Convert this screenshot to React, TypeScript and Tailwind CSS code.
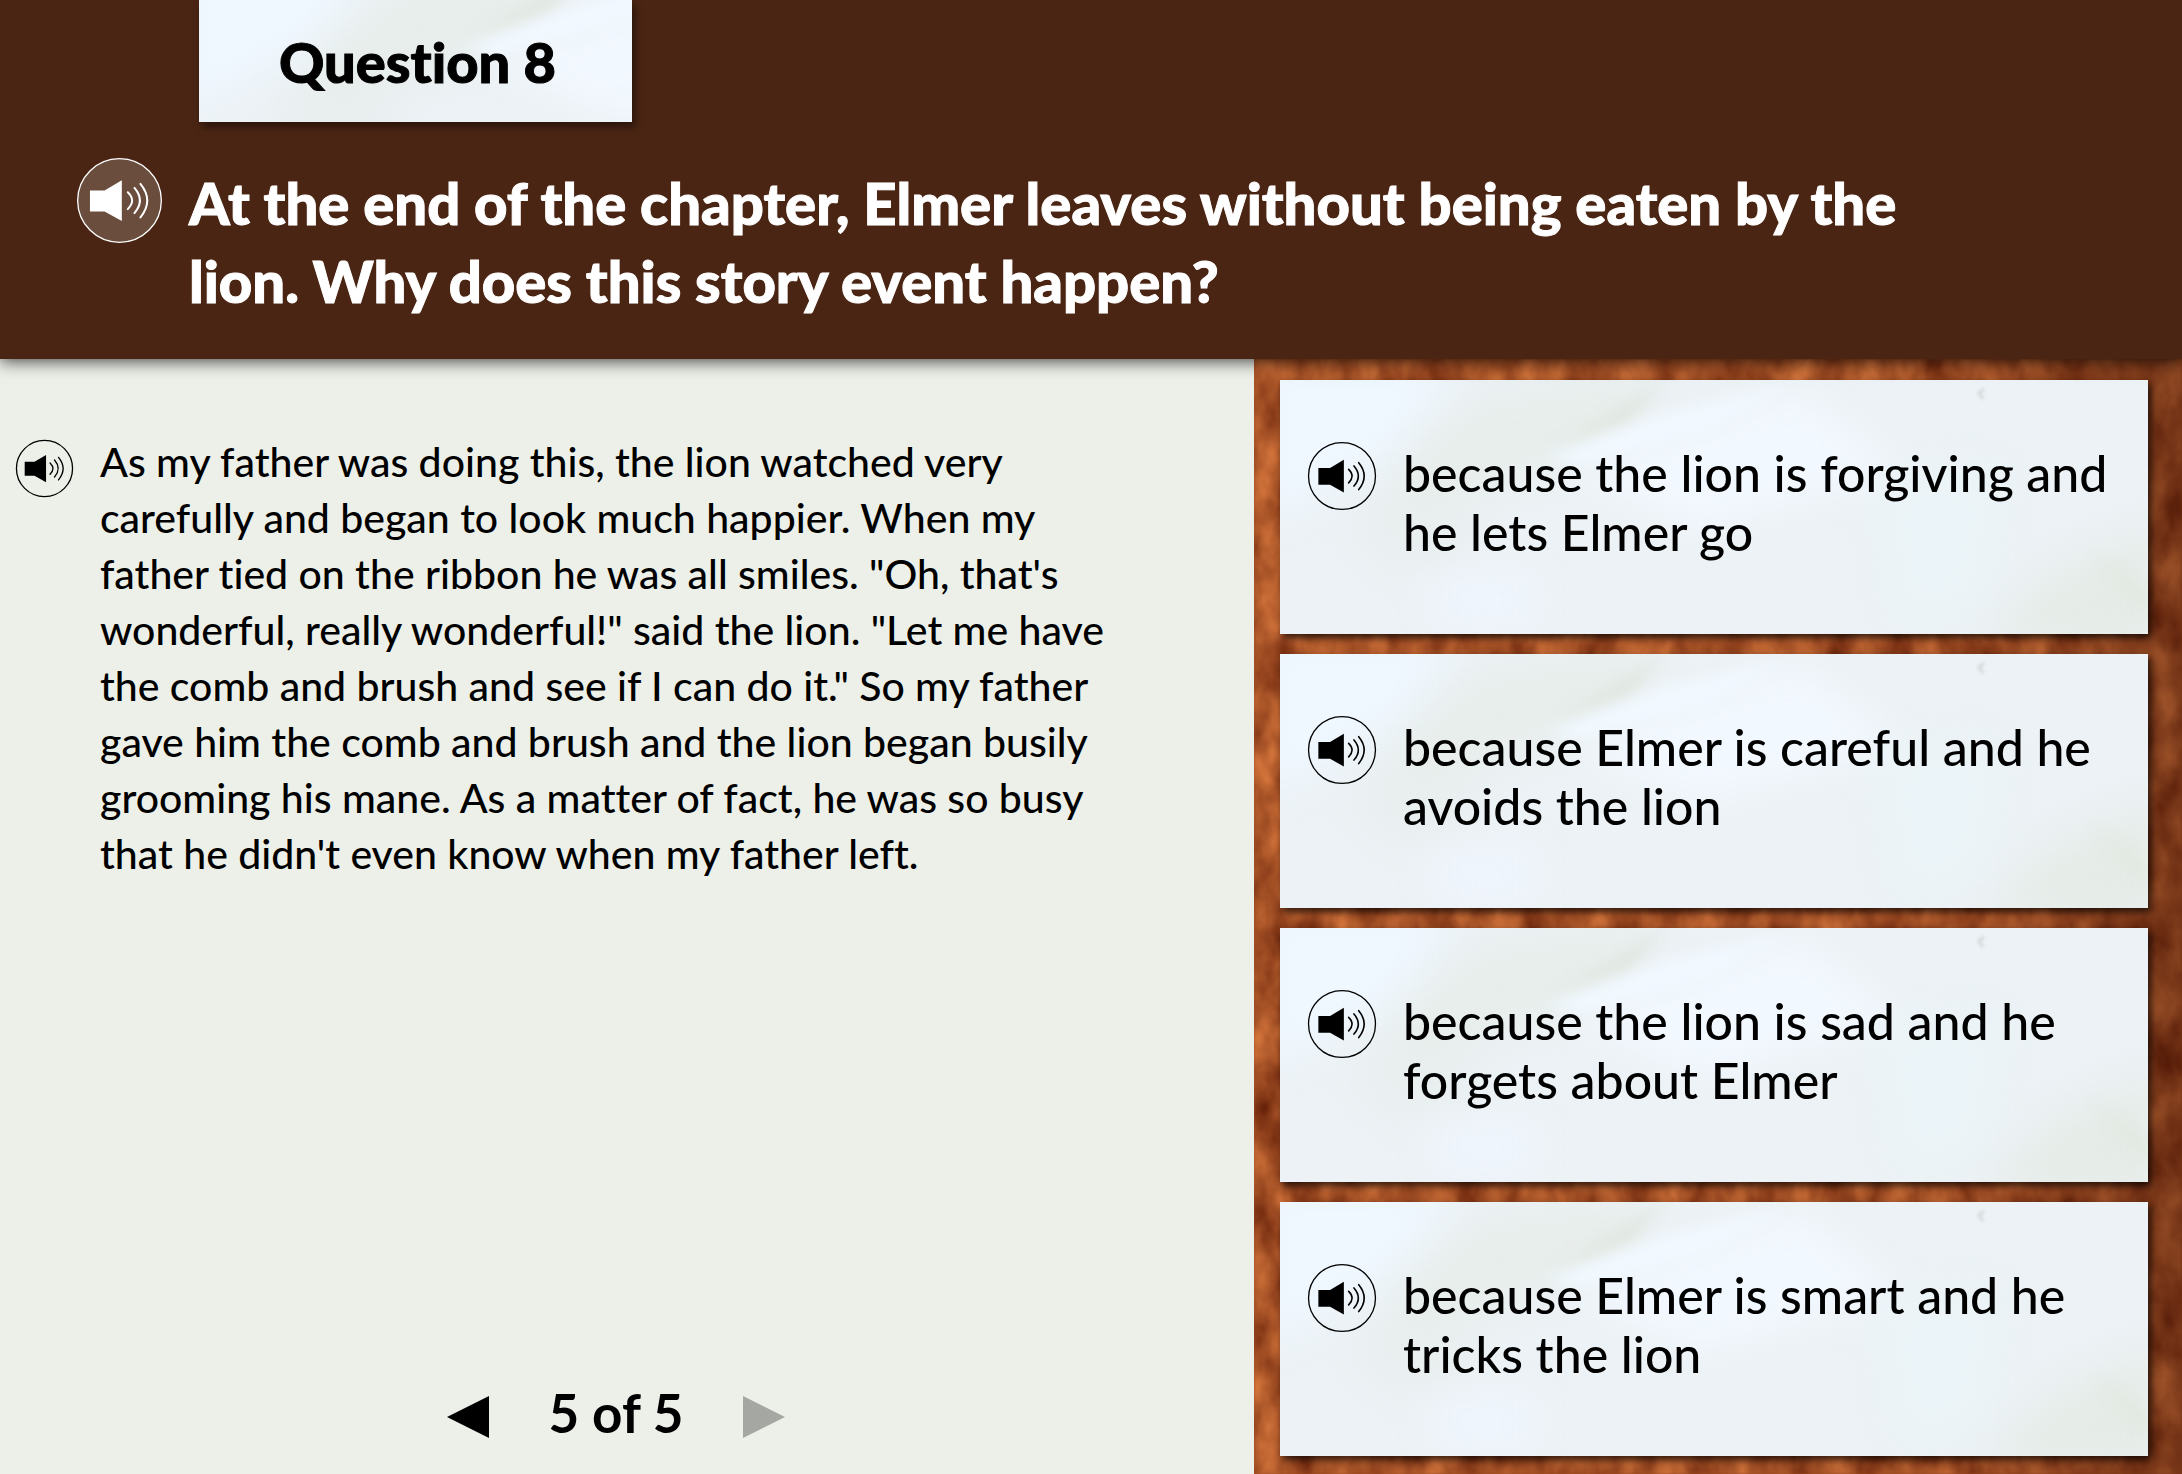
const passage =
  'As my father was doing this, the lion watched very carefully and began to look much happier. When my father tied on the ribbon he was all smiles. "Oh, that\'s wonderful, really wonderful!" said the lion. "Let me have the comb and brush and see if I can do it." So my father gave him the comb and brush and the lion began busily grooming his mane. As a matter of fact, he was so busy that he didn\'t even know when my father left.';

const answers = [
  'because the lion is forgiving and he lets Elmer go',
  'because Elmer is careful and he avoids the lion',
  'because the lion is sad and he forgets about Elmer',
  'because Elmer is smart and he tricks the lion',
];

function SpeakerButton({ label, className, fill = 'none' }: { label: string; className: string; fill?: string }) {
  return (
    <button type="button" aria-label={label} className={`shrink-0 cursor-pointer rounded-full ${className}`}>
      <svg viewBox="0 0 256 256" className="block h-full w-full overflow-visible" aria-hidden="true">
        <circle cx="128" cy="128" r="126" fill={fill} stroke="currentColor" strokeWidth="1.3" vectorEffect="non-scaling-stroke" />
        <path d="M39 98H83L135 67V190L83 161H39Z" fill="currentColor" />
        <g fill="none" stroke="currentColor" strokeWidth="6" strokeLinecap="round">
          <path d="M153 103Q179 128 153 154" />
          <path d="M173 90Q206 128 173 166" />
          <path d="M191 78Q232 128 191 179" />
        </g>
      </svg>
    </button>
  );
}

function PaperTexture({ id, viewBox = '0 0 868 254' }: { id: string; viewBox?: string }) {
  return (
    <svg viewBox={viewBox} preserveAspectRatio="none" className="absolute inset-0 h-full w-full" aria-hidden="true">
      <defs>
        <filter id={`${id}-wide`} x="-50%" y="-50%" width="200%" height="200%" colorInterpolationFilters="sRGB">
          <feGaussianBlur stdDeviation="20" />
        </filter>
        <filter id={`${id}-soft`} x="-50%" y="-50%" width="200%" height="200%" colorInterpolationFilters="sRGB">
          <feGaussianBlur stdDeviation="7" />
        </filter>
        <filter id={`${id}-fine`} x="-50%" y="-50%" width="200%" height="200%" colorInterpolationFilters="sRGB">
          <feGaussianBlur stdDeviation="1.5" />
        </filter>
      </defs>
      <rect width="868" height="254" fill="#ecf2f5" />
      <g filter={`url(#${id}-wide)`}>
        <path d="M-20-20H180L120 70L-20 150Z" fill="#eff7ff" />
        <path d="M200 20L380 -10L330 60L200 110L100 150L120 80Z" fill="#e7edea" />
        <path d="M290 90L520 10L620 90L420 150Z" fill="#f2f8ff" />
        <path d="M70 130L190 110L180 190L110 180Z" fill="#e8eeee" />
        <path d="M700 260L780 190L880 150V270Z" fill="#e5ebe6" />
        <path d="M150 190H260V250H150Z" fill="#eff5fd" />
        <path d="M600 100L720 90L700 220L620 240Z" fill="#ebf4f8" />
      </g>
      <g filter={`url(#${id}-soft)`}>
        <path d="M385 0L350 40L262 76L335 30Z" fill="#e0e6df" />
        <path d="M265 76L390 32L510 6L430 50L300 86Z" fill="#f1f8ff" />
        <path d="M810 170L868 216V232Z" fill="#e0e6dd" />
      </g>
      <path d="M704 9L699 13L703 19" fill="none" stroke="#d3d9db" strokeWidth="3" filter={`url(#${id}-fine)`} />
    </svg>
  );
}

function WoodTexture() {
  return (
    <svg className="absolute inset-0 h-full w-full" aria-hidden="true">
      <defs>
        <filter id="wood-grain" x="0" y="0" width="100%" height="100%" colorInterpolationFilters="sRGB">
          <feTurbulence type="fractalNoise" baseFrequency="0.03 0.018" numOctaves="4" seed="7" />
          <feColorMatrix
            values="0.6 0 0 0 0.35
                    0.46 0 0 0 0.09
                    0.28 0 0 0 0.01
                    0 0 0 0 1"
          />
          <feGaussianBlur stdDeviation="0.8" />
        </filter>
        <linearGradient id="wood-shade" x1="0" x2="1" y1="0" y2="0">
          <stop offset="0" stopColor="#2a0800" stopOpacity="0" />
          <stop offset="0.75" stopColor="#2a0800" stopOpacity="0.05" />
          <stop offset="1" stopColor="#2a0800" stopOpacity="0.38" />
        </linearGradient>
      </defs>
      <rect width="100%" height="100%" filter="url(#wood-grain)" />
      <rect width="100%" height="100%" fill="url(#wood-shade)" />
    </svg>
  );
}

export default function App() {
  return (
    <div className="flex min-h-screen flex-col bg-[#edf0e9] font-['Lato',sans-serif] text-black [font-variant-ligatures:none]">
      <header className="relative z-10 bg-[#4a2513] shadow-[0_2px_16px_rgba(0,0,0,0.75)]">
        <div className="relative ml-[199px] flex h-[122px] w-[433px] justify-center bg-[#ecf2f5] pt-8 pl-1 shadow-[3px_5px_8px_rgba(0,0,0,0.45)]">
          <PaperTexture id="tab" viewBox="0 30 433 122" />
          <h1 className="relative text-[56px] leading-[60px] font-black [-webkit-text-stroke:1px_currentColor]">Question 8</h1>
        </div>
        <div className="flex items-start gap-[27px] pt-9 pr-[182px] pb-[39px] pl-[77px] text-white">
          <SpeakerButton label="Read the question aloud" className="size-[85px]" fill="#6b4d3e" />
          <h2 className="pt-1.5 text-[58px] leading-[78px] font-black [-webkit-text-stroke:1px_currentColor]">
            At the end of the chapter, Elmer leaves without being eaten by the lion. Why does this story event happen?
          </h2>
        </div>
      </header>

      <main className="flex flex-1">
        <section className="flex flex-1 flex-col pt-[75px]">
          <div className="flex items-start gap-[27px] pr-[124px] pl-4">
            <SpeakerButton label="Read the passage aloud" className="mt-1.5 size-[57px]" />
            <p className="text-[41px] leading-[56px] font-medium">{passage}</p>
          </div>
          <nav aria-label="Passage pages" className="mt-auto flex items-center justify-center gap-[59px] pr-[22px] pb-[22px]">
            <button type="button" aria-label="Previous page" className="cursor-pointer">
              <svg viewBox="0 0 42 42" className="size-[42px]" aria-hidden="true">
                <path d="M42 0V42L0 21Z" fill="#000" />
              </svg>
            </button>
            <span className="pb-2 text-[53px] leading-[62px] font-bold">5 of 5</span>
            <button type="button" aria-label="Next page" disabled>
              <svg viewBox="0 0 42 42" className="size-[42px]" aria-hidden="true">
                <path d="M0 0V42L42 21Z" fill="#a5a7a2" />
              </svg>
            </button>
          </nav>
        </section>

        <section className="relative flex w-[928px] shrink-0 flex-col bg-[#a04b20] pt-[21px] pr-[34px] pb-[18px] pl-[26px]">
          <WoodTexture />
          <ul className="relative flex flex-1 flex-col gap-5">
            {answers.map((answer, i) => (
              <li
                key={answer}
                className="relative flex flex-1 items-start gap-[27px] bg-[#ecf2f5] px-7 pt-[62px] pb-[62px] shadow-[3px_4px_7px_rgba(0,0,0,0.7)]"
              >
                <PaperTexture id={`card-${i}`} />
                <SpeakerButton label={`Read answer ${i + 1} aloud`} className="relative size-[68px]" />
                <button type="button" className="relative flex-1 cursor-pointer pt-0.5 text-left text-[50px] leading-[59px] font-medium">
                  {answer}
                </button>
              </li>
            ))}
          </ul>
        </section>
      </main>
    </div>
  );
}
